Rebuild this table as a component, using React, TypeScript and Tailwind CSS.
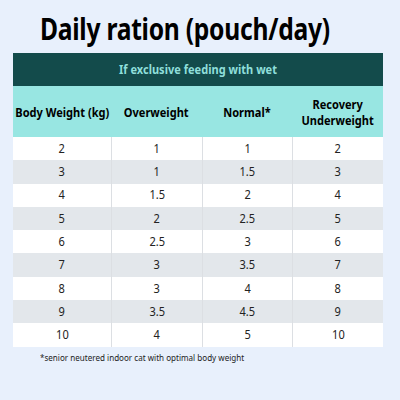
const rows = [
  ['2', '1', '1', '2'],
  ['3', '1', '1.5', '3'],
  ['4', '1.5', '2', '4'],
  ['5', '2', '2.5', '5'],
  ['6', '2.5', '3', '6'],
  ['7', '3', '3.5', '7'],
  ['8', '3', '4', '8'],
  ['9', '3.5', '4.5', '9'],
  ['10', '4', '5', '10'],
];

// the artwork uses a narrow face, so squeeze Noto Sans horizontally
function Narrow({ children, className = 'scale-x-[0.85]' }: { children: React.ReactNode; className?: string }) {
  return <span className={`inline-block whitespace-nowrap ${className}`}>{children}</span>;
}

export default function App() {
  return (
    <div className="w-[400px] h-[400px] bg-[#e8f0fc] overflow-hidden" style={{ fontFamily: '"Noto Sans", "Open Sans", sans-serif' }}>
      {/* Title */}
      <h1 className="pl-[40px] pt-[11px] h-[53px] text-[30px] leading-[36px] font-bold text-black tracking-[-0.3px]">
        <Narrow className="origin-left scale-x-[0.82]">Daily ration (pouch/day)</Narrow>
      </h1>

      {/* Table */}
      <div className="mx-[13px] w-[370px]">
        <div className="h-[33px] bg-[#134b4b] flex items-center justify-center text-[13px] font-bold text-[#8fdfda]">
          <Narrow>If exclusive feeding with wet</Narrow>
        </div>
        <div className="grid grid-cols-[98px_91px_90px_91px] h-[51px] bg-[#98e6e2] text-[13px] leading-[16px] font-bold text-black">
          <div className="flex items-center justify-center text-center"><Narrow>Body Weight (kg)</Narrow></div>
          <div className="flex items-center justify-center text-center"><Narrow>Overweight</Narrow></div>
          <div className="flex items-center justify-center text-center"><Narrow>Normal*</Narrow></div>
          <div className="flex flex-col items-center justify-center text-center">
            <Narrow>Recovery</Narrow>
            <Narrow>Underweight</Narrow>
          </div>
        </div>
        {rows.map((r, i) => (
          <div
            key={i}
            className={`grid grid-cols-[98px_91px_90px_91px] h-[23.3px] text-[13px] text-[#222] ${i % 2 === 0 ? 'bg-white' : 'bg-[#e3e7eb]'}`}
          >
            {r.map((c, j) => (
              <div key={j} className={`flex items-center justify-center ${j > 0 ? 'border-l border-[#dcdfe3]' : ''}`}>
                <Narrow>{c}</Narrow>
              </div>
            ))}
          </div>
        ))}
      </div>

      {/* Footnote */}
      <p className="pl-[40px] pt-[4px] text-[9.5px] text-[#222]">
        <Narrow className="origin-left scale-x-[0.85]">*senior neutered indoor cat with optimal body weight</Narrow>
      </p>
    </div>
  );
}
